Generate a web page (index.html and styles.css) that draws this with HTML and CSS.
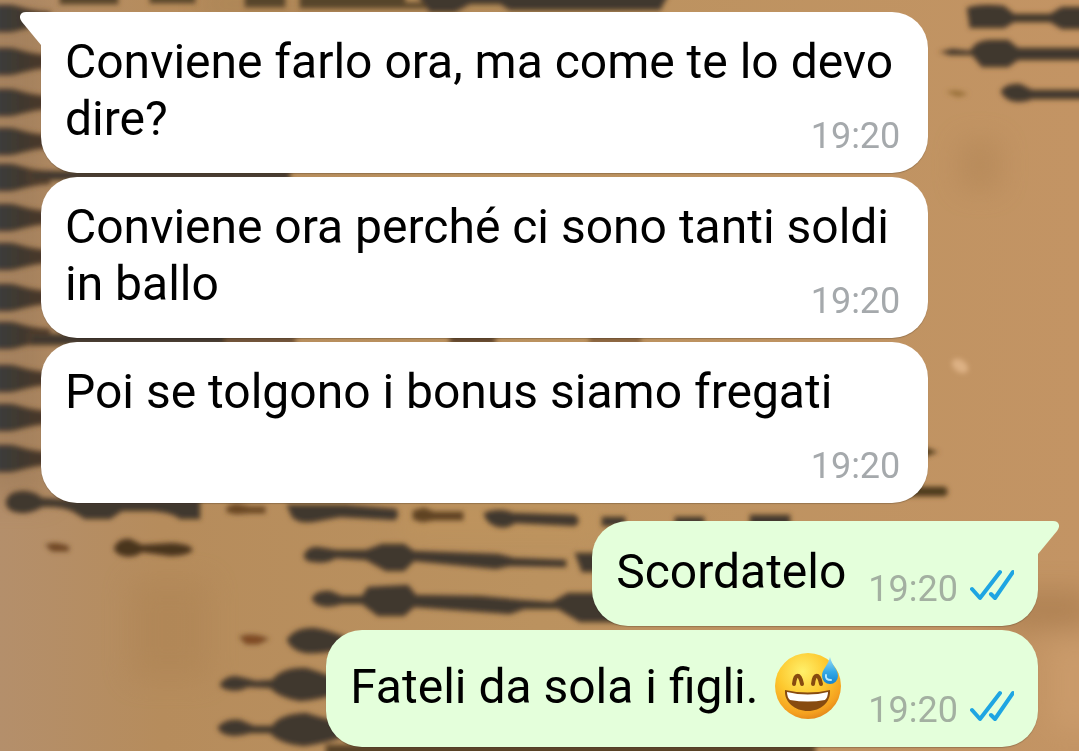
FILE: index.html
```
<!DOCTYPE html>
<html lang="it">
<head>
    <meta charset="UTF-8">
    <meta name="viewport" content="width=device-width, initial-scale=1.0">
    <title>Chat</title>
    <link rel="stylesheet" href="styles.css">
</head>
<body>
<svg class="wallpaper" viewBox="0 0 1079 751" preserveAspectRatio="xMidYMid slice" aria-hidden="true">
    <defs>
        <linearGradient id="sand" x1="0" y1="0" x2="1" y2="0">
            <stop offset="0" stop-color="#b48f6b"/>
            <stop offset=".15" stop-color="#b68c5c"/>
            <stop offset=".5" stop-color="#bb925f"/>
            <stop offset="1" stop-color="#c39464"/>
        </linearGradient>
        <linearGradient id="ink" x1="0" y1="0" x2="1" y2="0">
            <stop offset="0" stop-color="#3b3d40"/>
            <stop offset=".5" stop-color="#40392f"/>
            <stop offset="1" stop-color="#4c3828"/>
        </linearGradient>
        <filter id="soft" x="-5%" y="-5%" width="110%" height="110%">
            <feGaussianBlur stdDeviation="2.6"/>
        </filter>
        <filter id="haze" x="-20%" y="-20%" width="140%" height="140%">
            <feGaussianBlur stdDeviation="14"/>
        </filter>
        <path id="tooth" d="M-10 -13H10C20 -12 30 -6 50 -6V7C32 7 24 12 10 14H-10Z" fill="url(#ink)"/>
    </defs>
    <rect width="1079" height="751" fill="url(#sand)"/>
    <!-- lighter and darker patches of the paper -->
    <g filter="url(#haze)" opacity=".35">
        <rect x="130" y="580" width="80" height="100" fill="#a97f50"/>
        <rect x="1000" y="590" width="90" height="40" fill="#8f6438"/>
        <rect x="960" y="140" width="40" height="50" fill="#a67c4e"/>
        <rect x="1050" y="640" width="50" height="90" fill="#d8a878"/>
        <rect x="400" y="505" width="200" height="30" fill="#c79a5c"/>
        <rect x="-20" y="0" width="70" height="500" fill="#8a6a48"/>
        <rect x="200" y="0" width="420" height="8" fill="#5c4628"/>
    </g>
    <g filter="url(#soft)" fill="#3f382f" stroke="#6b4c2c" stroke-width="2" stroke-opacity=".5">
        <!-- left edge -->
        <use href="#tooth" y="18"/>
        <use href="#tooth" y="61"/>
        <use href="#tooth" y="102"/>
        <use href="#tooth" y="141"/>
        <use href="#tooth" y="177"/>
        <use href="#tooth" y="217"/>
        <use href="#tooth" y="256"/>
        <use href="#tooth" y="297"/>
        <use href="#tooth" y="335"/>
        <use href="#tooth" y="378"/>
        <use href="#tooth" y="417"/>
        <use href="#tooth" y="458"/>
        <!-- gaps between bubbles -->
        <path d="M30 171H290V180H30Z"/>
        <path d="M30 334H225V345H30Z"/>
        <path d="M225 336H295V344H225Z" fill="#6b4f38"/>
        <path d="M450 336H495V344H450Z" fill="#5b432c"/>
        <path d="M590 336H640V344H590Z" fill="#8b6540"/>
        <!-- top edge -->
        <path d="M60 -8H118V4H60ZM150 -8H195V3H150ZM245 -8H285V7H245ZM300 -8H405V3H440V8H300Z" fill="#57452a"/>
        <path d="M415 -8H670L660 10H510L500 4H470L455 12H430Z"/>
        <!-- row under the third bubble -->
        <path d="M6 502Q8 491 24 491Q36 492 42 498L75 500H200V519H180Q172 512 150 511H122L110 519H85L72 511Q60 506 42 507Q32 513 22 513Q6 512 6 502Z"/>
        <path d="M227 507L236 504L250 507L265 507V513H250L236 514L227 512Z" fill="#6b4724"/>
        <path d="M287 505H345L396 509Q400 515 395 520L340 517L318 521Q300 525 292 517Z"/>
        <path d="M413 511L424 508L434 512H463V520H434L422 522L413 519Z" fill="#5e4320"/>
        <path d="M484 513Q500 507 513 513L575 515Q582 521 575 526L515 523Q506 530 495 526Q485 522 484 513Z"/>
        <path d="M602 517H625V526H602Z"/>
        <path d="M675 517H704V526H675ZM750 515H790V526H750Z"/>
        <!-- loose strokes, left -->
        <path d="M46 545Q56 541 69 547L68 551H52Z" fill="#704422"/>
        <path d="M114 548Q118 538 130 539L142 545L172 543Q194 545 192 551Q185 556 170 556L142 552Q134 558 124 556Q115 554 114 548Z" fill="#4a341f"/>
        <path d="M304 555Q308 546 318 547L336 550H366L382 544H404L414 551L498 554L514 558L566 560V567L510 566L496 569L414 561L404 571H386L366 560L336 558Q326 564 315 562Q304 562 304 555Z"/>
        <path d="M575 553H610V572H582Z"/>
        <path d="M312 598Q316 590 330 591L342 596H362L368 587L408 585L416 595L480 596L522 600L552 602L568 593H620V622H580L558 609H524L510 614L414 607L404 616H378L362 604H342Q330 608 322 606Q313 604 312 598Z"/>
        <path d="M240 637Q252 632 268 639L258 644H246Z" fill="#804822"/>
        <path d="M287 639Q296 627 314 628Q328 630 345 637V648Q325 654 306 653Q290 650 287 639Z"/>
        <path d="M220 684Q228 674 240 677L256 681L272 680Q282 667 306 668Q320 672 340 680V692Q320 700 300 701Q280 698 270 688L248 687Q238 692 230 690Q221 689 220 684Z"/>
        <path d="M218 727Q226 718 240 720L254 726H272Q280 714 306 713Q320 718 340 722V738Q320 744 304 746Q280 744 270 733H250Q236 737 228 735Q219 733 218 727Z"/>
        <path d="M326 745H815V760H326Z" fill="#594326"/>
        <!-- right side -->
        <path d="M967 8Q980 3 1004 6L1014 14H1050L1062 7H1090V29H1062L1050 22H1014L1004 28H970Z"/>
        <path d="M941 52L952 49L970 51Q976 40 990 40H1008L1018 48H1090V60H1018L1008 67H982L972 55H950Z"/>
        <path d="M946 92Q956 88 968 94L958 97Z" fill="#987037" stroke="none"/>
        <path d="M1001 91Q1006 83 1020 84L1032 90H1090V99H1032Q1024 103 1012 101Q1003 98 1001 91Z"/>
        <path d="M920 446L937 452L920 458ZM905 487L945 487Q950 492 945 496H905Z" fill="#4c3a1a"/>
        <ellipse cx="960" cy="366" rx="9" ry="6" transform="rotate(35 960 366)" fill="#ddb184" stroke="none"/>
    </g>
</svg>

<main class="chat">
    <div class="message incoming first">
        <svg class="tail" viewBox="0 0 22 33" aria-hidden="true"><path d="M22 0H6C0 0-2 5 2 10L21 33H22Z"/></svg>
        Conviene farlo ora, ma come te lo devo dire?
        <time class="time">19:20</time>
    </div>
    <div class="message incoming">
        Conviene ora perché ci sono tanti soldi in ballo
        <time class="time">19:20</time>
    </div>
    <div class="message incoming">
        Poi se tolgono i bonus siamo fregati
        <time class="time">19:20</time>
    </div>
    <div class="message outgoing first">
        <svg class="tail" viewBox="0 0 22 33" aria-hidden="true"><path d="M0 0H16C22 0 24 5 20 10L1 33H0Z"/></svg>
        <div class="text">Scordatelo</div>
        <time class="time">19:20</time>
        <svg class="ticks" viewBox="0 0 44 42" role="img" aria-label="Letto"><path d="M2 21L10 30L30 4M21 26L25 30L43 4"/></svg>
    </div>
    <div class="message outgoing">
        <div class="text">Fateli da sola i figli.
            <svg class="emoji" viewBox="0 0 68 69" role="img" aria-label="Faccina che ride con goccia di sudore">
                <defs>
                    <radialGradient id="face" cx=".42" cy=".28" r=".75">
                        <stop offset="0" stop-color="#fff06a"/>
                        <stop offset=".5" stop-color="#fdc92f"/>
                        <stop offset=".85" stop-color="#f5a11f"/>
                        <stop offset="1" stop-color="#e2851a"/>
                    </radialGradient>
                    <linearGradient id="drop" x1="0" y1="0" x2="0" y2="1">
                        <stop offset="0" stop-color="#9adcf6"/>
                        <stop offset=".55" stop-color="#35a9e6"/>
                        <stop offset="1" stop-color="#1583cf"/>
                    </linearGradient>
                </defs>
                <circle cx="34" cy="34" r="33" fill="url(#face)"/>
                <path d="M20 32C21 21 26 21 28 32M39 32C40 21 45 21 47 32" fill="none" stroke="#874b10" stroke-width="4" stroke-linecap="round"/>
                <path d="M11 38Q34 43 56 38C57 50 47 59 34 59S10 50 11 38Z" fill="#874b10"/>
                <path d="M13 40Q34 45 54 40Q54 45 51 48Q34 51 16 48Q13 45 13 40Z" fill="#fff"/>
                <path d="M56 5C58 14 64 17 64 24A8 8 0 0 1 48 24C48 17 54 14 56 5Z" fill="url(#drop)"/>
                <path d="M52 23Q51 28 57 28" fill="none" stroke="#b9ebff" stroke-width="2" stroke-linecap="round"/>
            </svg>
        </div>
        <time class="time">19:20</time>
        <svg class="ticks" viewBox="0 0 44 42" role="img" aria-label="Letto"><path d="M2 21L10 30L30 4M21 26L25 30L43 4"/></svg>
    </div>
</main>
</body>
</html>
```
FILE: styles.css
```
* {
    box-sizing: border-box;
}

body {
    margin: 0;
    background: #bb9060;
    font-family: Roboto, sans-serif;
    overflow: hidden;
}

.wallpaper {
    position: fixed;
    inset: 0;
    width: 100%;
    height: 100%;
    z-index: -1;
}

.chat {
    display: flex;
    flex-direction: column;
    gap: 4px;
    padding: 12px 41px 4px;
}

.message {
    position: relative;
    max-width: 89%;
    border-radius: 36px;
    box-shadow: 0 1px 1px rgba(0, 0, 0, .2);
    font-size: 48px;
    line-height: 57px;
    color: #000;
}

.time {
    color: #a5a9ac;
    font-size: 36px;
    line-height: 42px;
}

.tail {
    position: absolute;
    top: 0;
    width: 22px;
    height: 33px;
}

/* incoming */
.incoming {
    display: flow-root;
    align-self: flex-start;
    padding: 21px 28px 16px 24px;
    background: #fff;
}

.incoming.first {
    border-top-left-radius: 0;
}

.incoming .time {
    float: right;
    margin-top: 25px;
}

.incoming .tail {
    right: calc(100% - 1px);
    fill: #fff;
}

/* outgoing */
.outgoing {
    display: flex;
    align-items: flex-end;
    align-self: flex-end;
    padding: 22px 24px 16px;
    background: #e4ffdb;
}

.outgoing.first {
    margin-top: 14px;
    border-top-right-radius: 0;
}

.outgoing .text {
    padding-bottom: 10px;
    margin-right: 22px;
}

.outgoing .time {
    color: #a3b0a1;
}

.outgoing .tail {
    left: calc(100% - 1px);
    fill: #e4ffdb;
}

.ticks {
    width: 44px;
    height: 42px;
    margin-left: 12px;
    fill: none;
    stroke: #1ea5e2;
    stroke-width: 4;
    stroke-linecap: round;
    stroke-linejoin: round;
}

.emoji {
    width: 68px;
    height: 69px;
    margin: 0 4px;
    vertical-align: -18px;
}
```
